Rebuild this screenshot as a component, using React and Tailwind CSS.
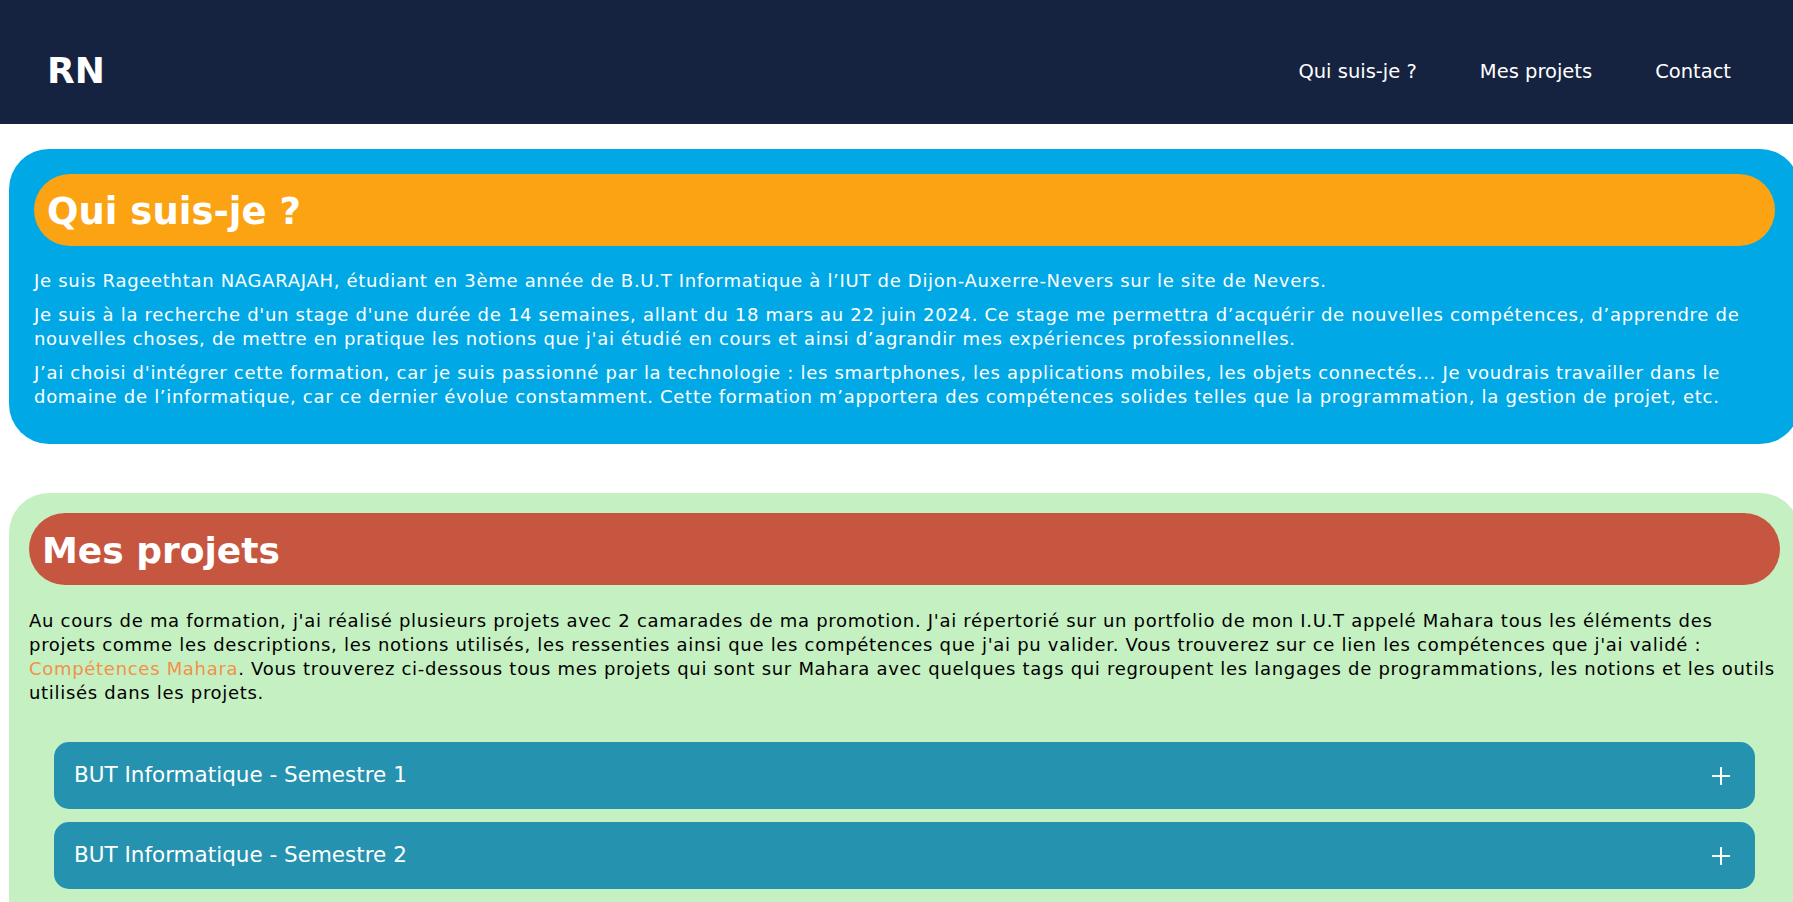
import { useState } from "react";

const semesters = [
  "BUT Informatique - Semestre 1",
  "BUT Informatique - Semestre 2",
  "BUT Informatique - Semestre 3",
  "BUT Informatique - Semestre 4",
];

function PlusIcon() {
  return (
    <svg width="20" height="20" viewBox="0 0 20 20" className="shrink-0">
      <line x1="10" y1="1" x2="10" y2="19" stroke="white" strokeWidth="2" />
      <line x1="1" y1="10" x2="19" y2="10" stroke="white" strokeWidth="2" />
    </svg>
  );
}

function Accordion({ title }) {
  const [open, setOpen] = useState(false);
  return (
    <div className="rounded-[15px] bg-[#2593af] text-white">
      <button
        className="flex h-[67px] w-full items-center justify-between pl-[20px] pr-[24px] text-left text-[21.5px]"
        onClick={() => setOpen(!open)}
      >
        <span>{title}</span>
        <PlusIcon />
      </button>
    </div>
  );
}

export default function App() {
  return (
    <div className="min-h-screen w-full overflow-x-hidden bg-white font-['DejaVu_Sans',sans-serif]">
      <header className="flex h-[124px] items-center justify-between bg-[#152240] pt-[18px] pl-[47px] pr-[62px] text-white">
        <span className="text-[36px] font-bold">RN</span>
        <nav className="flex gap-[63px] pt-[2px] text-[19.5px]">
          <a href="#qui">Qui suis-je ?</a>
          <a href="#projets">Mes projets</a>
          <a href="#contact">Contact</a>
        </nav>
      </header>

      <section
        id="qui"
        className="mt-[25px] ml-[9px] w-[1791px] rounded-[40px] bg-[#00a9e6] p-[25px] pb-[35px] text-white"
      >
        <h1 className="flex h-[72px] items-center rounded-full bg-[#fba313] pt-[4px] pl-[13px] text-[37px] font-bold">
          Qui suis-je ?
        </h1>
        <div className="mt-[23px] flex flex-col gap-[10px] text-[18px] leading-[24px] tracking-[0.7px]">
          <p>
            Je suis Rageethtan NAGARAJAH, étudiant en 3ème année de B.U.T Informatique à l’IUT de Dijon-Auxerre-Nevers sur le site de Nevers.
          </p>
          <p>
            Je suis à la recherche d'un stage d'une durée de 14 semaines, allant du 18 mars au 22 juin 2024. Ce stage me permettra d’acquérir de nouvelles compétences, d’apprendre de nouvelles choses, de mettre en pratique les notions que j'ai étudié en cours et ainsi d’agrandir mes expériences professionnelles.
          </p>
          <p>
            J’ai choisi d'intégrer cette formation, car je suis passionné par la technologie : les smartphones, les applications mobiles, les objets connectés... Je voudrais travailler dans le domaine de l’informatique, car ce dernier évolue constamment. Cette formation m’apportera des compétences solides telles que la programmation, la gestion de projet, etc.
          </p>
        </div>
      </section>

      <section
        id="projets"
        className="mt-[49px] ml-[9px] w-[1791px] rounded-[40px] bg-[#c5f0c1] p-[20px] text-black"
      >
        <h1 className="flex h-[72px] items-center rounded-full bg-[#c75640] pt-[4px] pl-[13px] text-[36px] font-bold text-white">
          Mes projets
        </h1>
        <p className="mt-[24px] text-[18px] leading-[24px] tracking-[0.7px]">
          Au cours de ma formation, j'ai réalisé plusieurs projets avec 2 camarades de ma promotion. J'ai répertorié sur un portfolio de mon I.U.T appelé Mahara tous les éléments des projets comme les descriptions, les notions utilisés, les ressenties ainsi que les compétences que j'ai pu valider. Vous trouverez sur ce lien les compétences que j'ai validé :{" "}
          <a href="#mahara" className="text-[#f39149]">
            Compétences Mahara
          </a>
          . Vous trouverez ci-dessous tous mes projets qui sont sur Mahara avec quelques tags qui regroupent les langages de programmations, les notions et les outils utilisés dans les projets.
        </p>
        <div className="mx-[25px] mt-[37px] flex flex-col gap-[13px]">
          {semesters.map((s) => (
            <Accordion key={s} title={s} />
          ))}
        </div>
      </section>
    </div>
  );
}
